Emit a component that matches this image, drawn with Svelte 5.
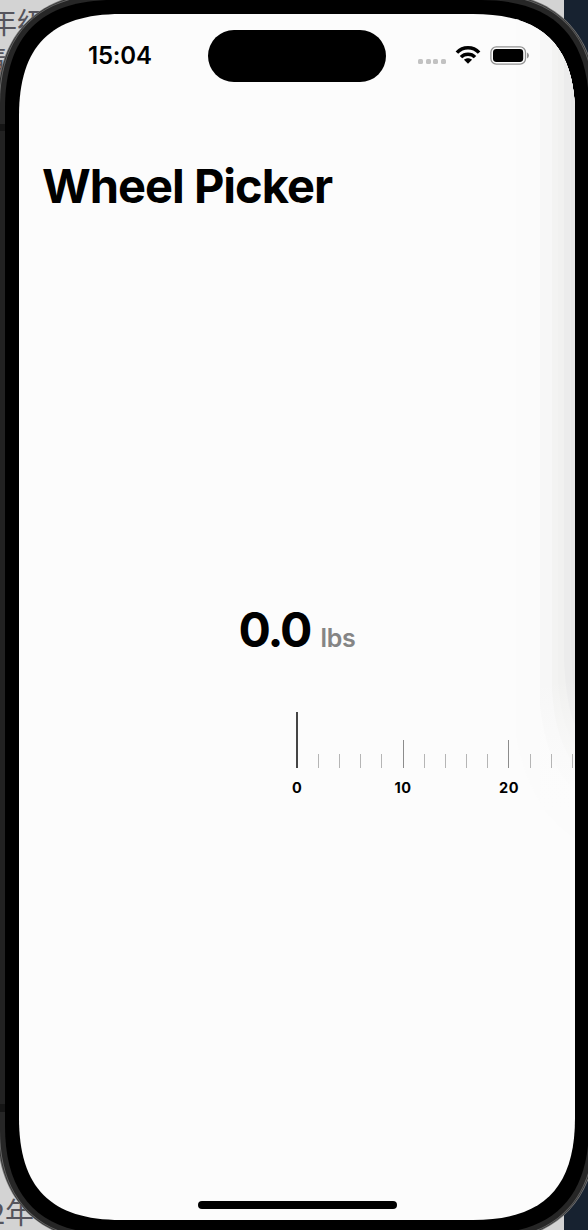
<script>
  // Rounded device outline with continuous (superelliptic) corners.
  function outline(x0, y0, x1, y1, e, c) {
    return `M${x0} ${y0 + e}C${x0} ${y0 + c} ${x0 + c} ${y0} ${x0 + e} ${y0}H${x1 - e}` +
      `C${x1 - c} ${y0} ${x1} ${y0 + c} ${x1} ${y0 + e}V${y1 - e}` +
      `C${x1} ${y1 - c} ${x1 - c} ${y1} ${x1 - e} ${y1}H${x0 + e}` +
      `C${x0 + c} ${y1} ${x0} ${y1 - c} ${x0} ${y1 - e}Z`;
  }
  const value = 0;
  const unit = 'lbs';
  const ticks = Array.from({ length: 14 }, (_, i) => i * 2);
</script>

<div class="desktop">
  <div class="behind top"><span>年级</span><span>青</span></div>
  <div class="behind bottom">2年</div>
  <div class="wallpaper"></div>

  <svg class="device" width="588" height="1230" viewBox="0 0 588 1230" aria-hidden="true">
    <path d={outline(-3, -8, 597, 1242, 112, 42)} fill="#777" />
    <path d={outline(-2, -7, 596, 1241, 111, 41)} fill="#333" />
    <path d={outline(-1, -6, 595, 1240, 110, 40)} fill="#666" />
    <path d={outline(0, -5, 594, 1239, 109, 39)} fill="#262626" />
    <path d="M0 131H6V1104H0z" fill="#222" />
    <path d="M0 124H6V131H0zM0 1104H6V1112H0z" fill="#151515" />
    <path d={outline(5, 0, 589, 1234, 108, 36)} fill="#000" />
    <path d={outline(19, 14, 575, 1220, 102, 32)} fill="#fcfcfc" />
    <clipPath id="display"><path d={outline(19, 14, 575, 1220, 102, 32)} /></clipPath>
    <linearGradient id="fade" x1="0" y1="0" x2="0" y2="1">
      <stop offset="0" stop-color="#fcfcfc" stop-opacity="0" />
      <stop offset="1" stop-color="#fcfcfc" />
    </linearGradient>
    <g clip-path="url(#display)">
      <path d="M516 14H575V838Q528 805 516 735Z" fill="#fbfbfb" />
      <path d="M540 14H575V790Q546 765 540 705Z" fill="#f7f7f7" />
      <path d="M552 14H575V765Q555 740 552 690Z" fill="#f3f3f2" />
      <path d="M558 14H575V745Q560 720 558 680Z" fill="#f1f1f0" />
      <path d="M564 14H575V725Q566 705 564 660Z" fill="#ececec" />
      <path d="M571 14H575V700Q572 680 571 640Z" fill="#e9e9e9" />
      <rect x="540" y="680" width="35" height="130" fill="url(#fade)" />
      <path d="M575 810V838Q556 826 544 810Z" fill="#fbfbfb" />
    </g>
  </svg>

  <main class="screen">
    <header>
      <time>15:04</time>
      <div class="island"></div>
      <div class="status">
        <div class="dots"><i></i><i></i><i></i><i></i></div>
        <svg class="wifi" width="26" height="20" viewBox="0 0 26 20">
          <g fill="none" stroke="#000" stroke-width="3.5">
            <path d="M1.9 7.6C8 1.1 18 1.1 24.1 7.6" />
            <path d="M6 12.1C9.8 8.2 16.2 8.2 20 12.1" />
          </g>
          <path d="M9 14.8C11.2 12.8 14.8 12.8 17 14.8L13 18.8Z" />
        </svg>
        <svg class="battery" width="40" height="20" viewBox="0 0 40 20">
          <rect x=".9" y=".9" width="34.6" height="17.2" rx="5.4" fill="none" stroke="#929292" stroke-width="1.3" />
          <rect x="3" y="3" width="30.2" height="13" rx="3.4" />
          <path d="M37 6.6Q39 7.6 39 9.5T37 12.5Z" fill="#929292" />
        </svg>
      </div>
    </header>

    <h1>Wheel Picker</h1>

    <section class="picker">
      <div class="reading"><strong>{value.toFixed(1)}</strong><span>{unit}</span></div>
      <div class="wheel">
        {#each ticks as t}
          <div class="tick" class:major={t % 10 === 0} class:active={t === value}>
            <i></i>
            {#if t % 10 === 0}<b>{t}</b>{/if}
          </div>
        {/each}
      </div>
    </section>
    <div class="home"></div>
  </main>
</div>

<style>
  .desktop {
    position: relative;
    width: 588px;
    height: 1230px;
    overflow: hidden;
    background: #d3d3d3;
    font-family: Inter, sans-serif;
    font-optical-sizing: none;
    color: #000;
  }
  .behind {
    position: absolute;
    left: -12px;
    font: 400 29px/38px "Noto Sans CJK SC", sans-serif;
    color: #55545c;
    white-space: nowrap;
  }
  .behind.top { top: 2px; display: flex; flex-direction: column; }
  .behind.top span:last-child { margin-left: -9px; }
  .behind.bottom { top: 1192px; left: -11px; }
  .wallpaper {
    position: absolute;
    inset: 0 0 0 564px;
    background: #172230;
  }
  .device { position: absolute; inset: 0; display: block; }
  .screen {
    position: relative;
    box-sizing: border-box;
    height: 1230px;
    margin: 0 13px 0 19px;
    overflow: hidden;
    display: flex;
    flex-direction: column;
    align-items: center;
  }
  header {
    box-sizing: border-box;
    width: 100%;
    padding-top: 30px;
    display: grid;
    grid-template-columns: 189px 178px 189px;
  }
  time {
    padding-left: 69px;
    font-size: 24px;
    font-weight: 600;
    line-height: 52px;
    letter-spacing: -0.2px;
  }
  .island { height: 52px; border-radius: 26px; background: #000; }
  .status { display: flex; align-items: flex-start; padding: 15px 0 0 32px; }
  .dots { display: flex; gap: 2.7px; padding-top: 14px; }
  .dots i { width: 5px; height: 5px; border-radius: 1.6px; background: #c2c2c2; }
  .wifi { margin-left: 9px; }
  .battery { margin: 1px 0 0 9px; }
  h1 {
    align-self: flex-start;
    margin: 75px 0 0 23px;
    font-size: 47px;
    font-weight: 700;
    line-height: 58px;
    letter-spacing: -1px;
    white-space: nowrap;
  }
  .picker { width: 100%; margin-top: 385px; }
  .reading {
    display: flex;
    align-items: baseline;
    justify-content: center;
    gap: 10px;
    line-height: 60px;
  }
  strong { font-size: 48px; font-weight: 700; letter-spacing: -2px; }
  .reading span { font-size: 25px; font-weight: 600; color: #858585; letter-spacing: -0.3px; }
  .wheel {
    display: flex;
    align-items: flex-start;
    margin-top: 44px;
    padding-left: 267.5px;
  }
  .tick {
    flex: 0 0 21.2px;
    display: flex;
    flex-direction: column;
    align-items: center;
  }
  .tick i { width: 1px; height: 14px; margin-top: 42px; background: #b5b5b5; }
  .tick.major i { height: 28px; margin-top: 28px; background: #8c8c8c; }
  .tick.active i { height: 56px; margin-top: 0; background: #454545; width: 2px; }
  .tick b { margin-top: 10px; font-size: 14.5px; font-weight: 700; line-height: 20px; letter-spacing: 0.4px; }
  .home {
    width: 199px;
    height: 8px;
    margin: auto 0 21px;
    flex: none;
    border-radius: 4px;
    background: #000;
  }
</style>
